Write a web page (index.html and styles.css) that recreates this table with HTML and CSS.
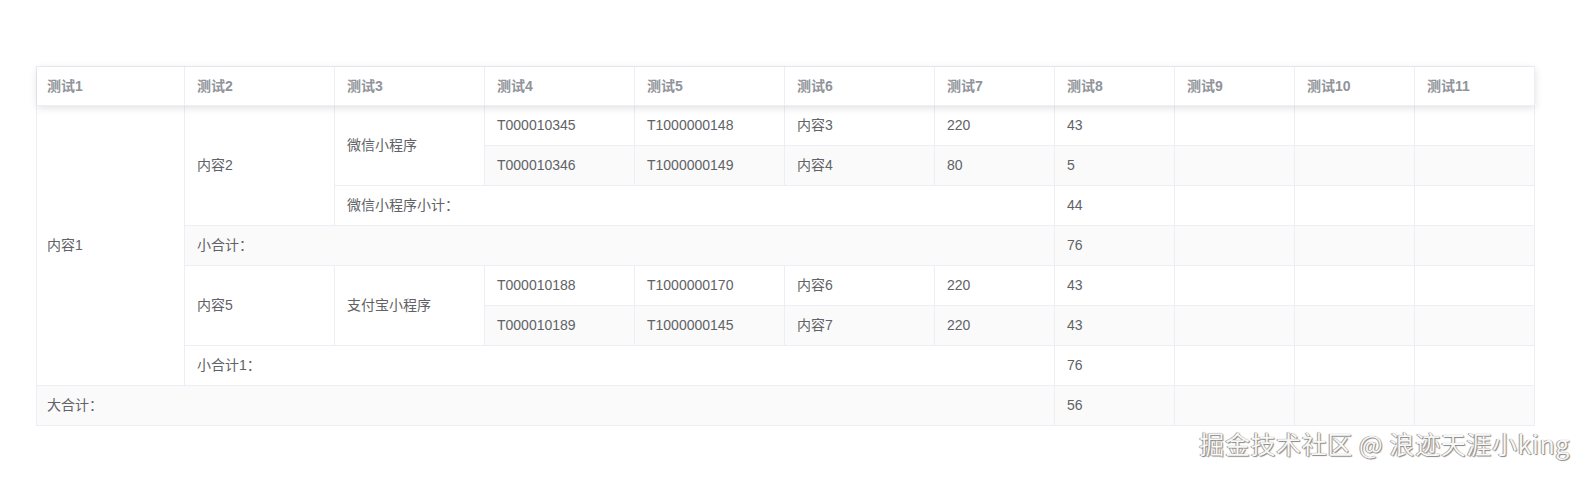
FILE: index.html
```html
<!DOCTYPE html>
<html lang="zh">
<head>
<meta charset="utf-8">
<title>表格</title>
<link rel="stylesheet" href="styles.css">
</head>
<body>
<div class="page">
  <div class="el-table">
    <div class="header-wrap">
      <table class="tbl">
        <colgroup>
          <col class="c1"><col class="cw"><col class="cw"><col class="cw"><col class="cw"><col class="cw">
          <col class="cn"><col class="cn"><col class="cn"><col class="cn"><col class="cn">
        </colgroup>
        <thead>
          <tr>
            <th class="first">测试1</th><th>测试2</th><th>测试3</th><th>测试4</th><th>测试5</th><th>测试6</th>
            <th>测试7</th><th>测试8</th><th>测试9</th><th>测试10</th><th>测试11</th>
          </tr>
        </thead>
      </table>
    </div>
    <div class="body-wrap">
      <table class="tbl">
        <colgroup>
          <col class="c1"><col class="cw"><col class="cw"><col class="cw"><col class="cw"><col class="cw">
          <col class="cn"><col class="cn"><col class="cn"><col class="cn"><col class="cn">
        </colgroup>
        <tbody>
          <tr>
            <td class="first" rowspan="7">内容1</td>
            <td rowspan="3">内容2</td>
            <td rowspan="2">微信小程序</td>
            <td>T000010345</td><td>T1000000148</td><td>内容3</td><td>220</td><td>43</td><td></td><td></td><td></td>
          </tr>
          <tr class="stripe">
            <td>T000010346</td><td>T1000000149</td><td>内容4</td><td>80</td><td>5</td><td></td><td></td><td></td>
          </tr>
          <tr>
            <td colspan="5">微信小程序小计：</td><td>44</td><td></td><td></td><td></td>
          </tr>
          <tr class="stripe">
            <td colspan="6">小合计：</td><td>76</td><td></td><td></td><td></td>
          </tr>
          <tr>
            <td rowspan="2">内容5</td>
            <td rowspan="2">支付宝小程序</td>
            <td>T000010188</td><td>T1000000170</td><td>内容6</td><td>220</td><td>43</td><td></td><td></td><td></td>
          </tr>
          <tr class="stripe">
            <td>T000010189</td><td>T1000000145</td><td>内容7</td><td>220</td><td>43</td><td></td><td></td><td></td>
          </tr>
          <tr>
            <td colspan="6">小合计1：</td><td>76</td><td></td><td></td><td></td>
          </tr>
          <tr class="stripe">
            <td class="first" colspan="7">大合计：</td><td>56</td><td></td><td></td><td></td>
          </tr>
        </tbody>
      </table>
    </div>
  </div>
  <div class="watermark">掘金技术社区 @ 浪迹天涯小king</div>
</div>
</body>
</html>
```

FILE: styles.css
```css
html, body {
  margin: 0;
  padding: 0;
  background: #fff;
}

.page {
  position: relative;
  width: 1586px;
  height: 481px;
  padding: 66px 0 0 36px;
  box-sizing: border-box;
  font-family: "Liberation Sans", Arial, "Noto Sans CJK SC", sans-serif;
}

.el-table {
  width: 1499px;
  border-left: 1px solid #EBEEF5;
  border-top: 1px solid #EBEEF5;
  box-sizing: border-box;
  background: #fff;
}

.header-wrap {
  position: relative;
  z-index: 2;
  box-shadow: 0 2px 8px rgba(0, 0, 0, 0.12);
}

.body-wrap {
  position: relative;
  z-index: 1;
}

.tbl {
  table-layout: fixed;
  border-collapse: separate;
  border-spacing: 0;
  width: 1498px;
}

.c1 { width: 148px; }
.cw { width: 150px; }
.cn { width: 120px; }

.tbl th,
.tbl td {
  box-sizing: border-box;
  padding: 0 10px 0 12px;
  border-right: 1px solid #EBEEF5;
  border-bottom: 1px solid #EBEEF5;
  text-align: left;
  vertical-align: middle;
  line-height: 23px;
  white-space: nowrap;
  overflow: hidden;
}

.tbl th.first,
.tbl td.first {
  padding-left: 10px;
}

.tbl th {
  height: 39px;
  color: #909399;
  font-size: 14px;
  font-weight: bold;
  background: #fff;
}

.tbl td {
  height: 40px;
  color: #606266;
  font-size: 14px;
  background: #fff;
}

.tbl tr.stripe td {
  background: #FAFAFA;
}

.watermark {
  position: absolute;
  right: 16px;
  top: 427px;
  font-family: "Noto Sans CJK SC", sans-serif;
  font-size: 25px;
  line-height: 32px;
  color: #f7f7f7;
  letter-spacing: 0.6px;
  text-shadow: 0 0 1px #7a7a7a, 1px 1px 1px #8a8a8a, -1px 0 0 #b0b0b0;
}
```
